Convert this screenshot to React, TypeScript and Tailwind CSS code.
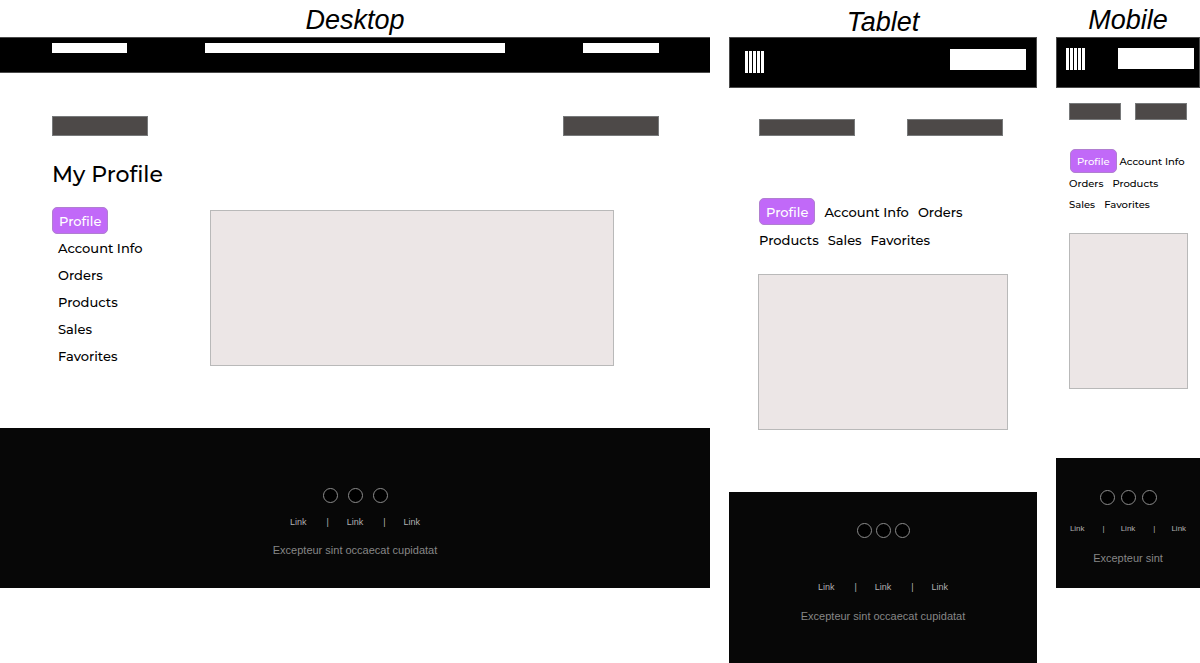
import clsx from "clsx";

const TITLE = "flex h-[37px] items-end justify-center text-[27px] italic";
const DARK = "border border-[#77797a] bg-[#4d4948]";
const PANEL = "h-[156px] border border-[#b9b9b9] bg-[#ece6e6]";
const HEADER = "flex items-start justify-between border border-[#4a4a4a] bg-black";

function NavLink({ label, className }: { label: string; className: string }) {
  const active = label === "Profile";
  return (
    <a
      href="#"
      aria-current={active ? "page" : undefined}
      className={clsx(
        "block whitespace-nowrap font-medium",
        active
          ? "rounded-[5px] border border-[#b07fd0] bg-[#c169f8] px-[6px] text-white"
          : "border-y border-transparent",
        className,
      )}
    >
      {label}
    </a>
  );
}

function Stripes() {
  return (
    <svg width="20" height="22" viewBox="0 0 20 22" aria-hidden="true">
      {[0, 4, 8, 12, 16].map((x) => (
        <rect key={x} x={x} y="0" width="3" height="22" fill="#fff" />
      ))}
    </svg>
  );
}

function Circles({ className }: { className: string }) {
  return (
    <div className={clsx("flex justify-center", className)}>
      {[0, 1, 2].map((n) => (
        <span key={n} className="size-[15px] rounded-full border border-[#8c8c8c] bg-black" />
      ))}
    </div>
  );
}

function FooterLinks({ className, barClass }: { className: string; barClass: string }) {
  return (
    <nav aria-label="Footer" className={clsx("flex justify-center leading-3 text-[#b0b0b0]", className)}>
      <a href="#">Link</a>
      <span className={barClass}>|</span>
      <a href="#">Link</a>
      <span className={barClass}>|</span>
      <a href="#">Link</a>
    </nav>
  );
}

function Desktop() {
  return (
    <section>
      <h2 className={clsx(TITLE, "leading-[33px]")}>Desktop</h2>
      <header className="flex h-9 justify-between border-y border-[#4a4a4a] bg-black pr-[51px] pl-[52px] pt-[5px]">
        <div className="h-[10px] w-[75px] bg-white" />
        <div className="h-[10px] w-[300px] bg-white" />
        <div className="h-[10px] w-[76px] bg-white" />
      </header>
      <main className="pt-[43px] pb-[59px] pl-[52px] font-['Montserrat','Inter',sans-serif]">
        <div className="flex justify-between pr-[51px]">
          <div className={clsx(DARK, "h-5 w-24")} />
          <div className={clsx(DARK, "h-5 w-24")} />
        </div>
        <h1 className="mt-6 text-[22px] leading-[29px] font-medium">My Profile</h1>
        <div className="mt-[18px] flex pr-24">
          <nav aria-label="Account" className="flex w-[158px] flex-col items-start text-[13px]">
            {["Profile", "Account Info", "Orders", "Products", "Sales", "Favorites"].map((label) => (
              <NavLink
                key={label}
                label={label}
                className="h-[27px] px-[6px] leading-[27px]"
              />
            ))}
          </nav>
          <div className={clsx(PANEL, "mt-[3px] flex-1")} />
        </div>
      </main>
      <footer className="bg-[#070707] pt-[60px] pb-[30px]">
        <Circles className="gap-[10px]" />
        <FooterLinks className="mt-[13px] text-[9px]" barClass="mr-[18px] ml-5" />
        <p className="mt-[14px] text-center text-[11px] leading-4 text-[#868686]">
          Excepteur sint occaecat cupidatat
        </p>
      </footer>
    </section>
  );
}

function Tablet() {
  const link = "h-[27px] leading-[27px]";
  return (
    <section>
      <h2 className={clsx(TITLE, "leading-[29px]")}>Tablet</h2>
      <header className={clsx(HEADER, "h-[51px] pt-[11px] pr-[10px] pl-[15px]")}>
        <div className="pt-[2px]">
          <Stripes />
        </div>
        <div className="h-[21px] w-[76px] bg-white" />
      </header>
      <main className="px-[29px] pt-[31px] pb-[62px] font-['Montserrat','Inter',sans-serif]">
        <div className="flex justify-between pr-[5px] pl-px">
          <div className={clsx(DARK, "h-[17px] w-24")} />
          <div className={clsx(DARK, "h-[17px] w-24")} />
        </div>
        <nav aria-label="Account" className="mt-[62px] flex flex-col gap-px pl-px text-[13px]">
          <div className="flex gap-[9px]">
            <NavLink label="Profile" className={link} />
            <NavLink label="Account Info" className={link} />
            <NavLink label="Orders" className={link} />
          </div>
          <div className="flex gap-[9px]">
            <NavLink label="Products" className={link} />
            <NavLink label="Sales" className={link} />
            <NavLink label="Favorites" className={link} />
          </div>
        </nav>
        <div className={clsx(PANEL, "mt-[21px]")} />
      </main>
      <footer className="bg-[#070707] pt-[31px] pb-[39px]">
        <Circles className="gap-1" />
        <FooterLinks className="mt-[43px] text-[9px]" barClass="mr-[18px] ml-5" />
        <p className="mt-[15px] text-center text-[11px] leading-4 text-[#868686]">
          Excepteur sint occaecat cupidatat
        </p>
      </footer>
    </section>
  );
}

function Mobile() {
  const link = "h-[21px] leading-[20px]";
  return (
    <section>
      <h2 className={clsx(TITLE, "leading-[33px]")}>Mobile</h2>
      <header className={clsx(HEADER, "h-[51px] pt-[10px] pr-[5px] pl-[9px]")}>
        <Stripes />
        <div className="h-[21px] w-[76px] bg-white" />
      </header>
      <main className="pt-[15px] pr-3 pb-[69px] pl-[13px] font-['Montserrat','Inter',sans-serif]">
        <div className="flex justify-between pr-px">
          <div className={clsx(DARK, "h-[17px] w-[52px]")} />
          <div className={clsx(DARK, "h-[17px] w-[52px]")} />
        </div>
        <nav aria-label="Account" className="mt-[29px] flex flex-col text-[10px]">
          <div className="flex gap-[3px] pl-px">
            <NavLink label="Profile" className="h-6 leading-6" />
            <NavLink label="Account Info" className="h-6 leading-6" />
          </div>
          <div className="flex gap-[9px]">
            <NavLink label="Orders" className={link} />
            <NavLink label="Products" className={link} />
          </div>
          <div className="flex gap-[9px]">
            <NavLink label="Sales" className={link} />
            <NavLink label="Favorites" className={link} />
          </div>
        </nav>
        <div className={clsx(PANEL, "mt-[18px]")} />
      </main>
      <footer className="bg-[#070707] pt-8 pb-[22px]">
        <Circles className="gap-[6px]" />
        <FooterLinks className="mt-[18px] text-[8px]" barClass="mr-4 ml-[18px]" />
        <p className="mt-[15px] text-center text-[11px] leading-4 text-[#868686]">Excepteur sint</p>
      </footer>
    </section>
  );
}

export default function App() {
  return (
    <div className="grid grid-cols-[minmax(0,710fr)_minmax(0,308fr)_minmax(0,144fr)] items-start gap-[19px] bg-white font-['Liberation_Sans',Arial,sans-serif] text-black">
      <Desktop />
      <Tablet />
      <Mobile />
    </div>
  );
}
